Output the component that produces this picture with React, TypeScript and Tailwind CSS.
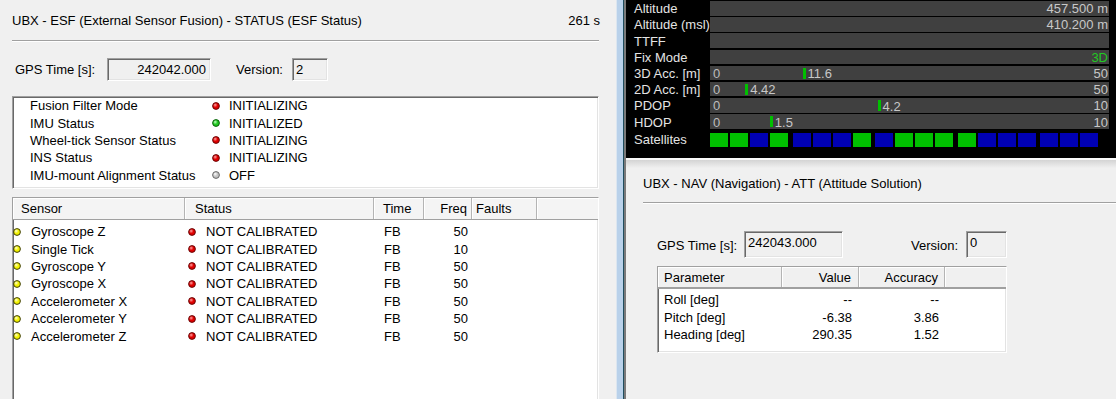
import React from 'react';

type DotColor = 'red' | 'green' | 'gray' | 'yellow';
const DOT: Record<DotColor, [string, string, string]> = {
  red: ['#ffa0a0', '#e00000', '#5a0000'],
  green: ['#c0ffc0', '#22c822', '#005000'],
  gray: ['#ffffff', '#c4c4c4', '#5a5a5a'],
  yellow: ['#ffffd0', '#f2f200', '#2a2a00'],
};

function Dot({ c }: { c: DotColor }) {
  const [hi, mid, edge] = DOT[c];
  const id = `dot-${c}`;
  return (
    <svg width="8" height="8" viewBox="0 0 8 8" className="shrink-0">
      <defs>
        <radialGradient id={id} cx="0.38" cy="0.35" r="0.7">
          <stop offset="0" stopColor={hi} />
          <stop offset="0.5" stopColor={mid} />
          <stop offset="1" stopColor={mid} />
        </radialGradient>
      </defs>
      <circle cx="4" cy="4" r="3.4" fill={`url(#${id})`} stroke={edge} strokeWidth="0.9" />
    </svg>
  );
}

const sunken =
  'border border-t-[#a0a0a0] border-l-[#a0a0a0] border-b-white border-r-white shadow-[inset_1px_1px_0_#696969,inset_-1px_-1px_0_#e3e3e3]';
const hdrCell =
  'h-full flex items-center border-r border-r-[#b4b4b4] shadow-[inset_1px_1px_0_#ffffff]';

const fusion: [string, DotColor, string][] = [
  ['Fusion Filter Mode', 'red', 'INITIALIZING'],
  ['IMU Status', 'green', 'INITIALIZED'],
  ['Wheel-tick Sensor Status', 'red', 'INITIALIZING'],
  ['INS Status', 'red', 'INITIALIZING'],
  ['IMU-mount Alignment Status', 'gray', 'OFF'],
];

const sensors: [string, string][] = [
  ['Gyroscope Z', '50'],
  ['Single Tick', '10'],
  ['Gyroscope Y', '50'],
  ['Gyroscope X', '50'],
  ['Accelerometer X', '50'],
  ['Accelerometer Y', '50'],
  ['Accelerometer Z', '50'],
];

type Bar = {
  label: string;
  zero?: boolean;
  marker?: number;
  max?: number;
  mtext?: string;
  right?: string;
  green?: boolean;
};
const bars: Bar[] = [
  { label: 'Altitude', right: '457.500 m' },
  { label: 'Altitude (msl)', right: '410.200 m' },
  { label: 'TTFF' },
  { label: 'Fix Mode', right: '3D', green: true },
  { label: '3D Acc. [m]', zero: true, marker: 11.6, max: 50, mtext: '11.6', right: '50' },
  { label: '2D Acc. [m]', zero: true, marker: 4.42, max: 50, mtext: '4.42', right: '50' },
  { label: 'PDOP', zero: true, marker: 4.2, max: 10, mtext: '4.2', right: '10' },
  { label: 'HDOP', zero: true, marker: 1.5, max: 10, mtext: '1.5', right: '10' },
];

const sats: string[][] = [
  ['g', 'g', 'b', 'g'],
  ['b', 'b', 'b', 'g'],
  ['b', 'g', 'g', 'g'],
  ['g', 'b', 'b', 'b'],
  ['b', 'b', 'b'],
];

const att: [string, string, string][] = [
  ['Roll [deg]', '--', '--'],
  ['Pitch [deg]', '-6.38', '3.86'],
  ['Heading [deg]', '290.35', '1.52'],
];

function LeftPanel() {
  return (
    <div className="w-[616px] h-[399px] shrink-0 bg-[#f0f0f0] pl-[12px] flex flex-col overflow-hidden">
      <div className="w-[588px] h-[40px] shrink-0 flex items-center justify-between">
        <span>UBX - ESF (External Sensor Fusion) - STATUS (ESF Status)</span>
        <span>261 s</span>
      </div>
      <div className="w-[587px] h-[2px] shrink-0 border-t border-t-[#a0a0a0] border-b border-b-white" />
      <div className="mt-[16px] h-[23px] shrink-0 flex items-center pl-[3px]">
        <span className="w-[92px]">GPS Time [s]:</span>
        <div className={`w-[104px] h-[23px] ${sunken} bg-[#f0f0f0] flex items-center justify-end pr-[4px]`}>
          242042.000
        </div>
        <span className="ml-[25px] w-[56px]">Version:</span>
        <div className={`w-[36px] h-[23px] ${sunken} bg-[#f0f0f0] flex items-center pl-[3px]`}>2</div>
      </div>
      <div className={`mt-[15px] w-[587px] h-[93px] shrink-0 ${sunken} bg-white flex flex-col`}>
        {fusion.map(([l, c, s]) => (
          <div key={l} className="h-[17.4px] flex items-center">
            <span className="w-[199px] pl-[17px] shrink-0 whitespace-nowrap">{l}</span>
            <Dot c={c} />
            <span className="ml-[9px]">{s}</span>
          </div>
        ))}
      </div>
      <div className={`mt-[8px] w-[587px] h-[240px] shrink-0 ${sunken} bg-white flex flex-col`}>
        <div className="h-[22px] shrink-0 bg-[#f4f4f4] border-b border-b-[#a0a0a0] grid grid-cols-[172px_189px_50px_48px_65px_1fr]">
          <div className={`${hdrCell} pl-[8px]`}>Sensor</div>
          <div className={`${hdrCell} pl-[10px]`}>Status</div>
          <div className={`${hdrCell} pl-[9px]`}>Time</div>
          <div className={`${hdrCell} justify-end pr-[4px]`}>Freq</div>
          <div className={`${hdrCell} pl-[4px]`}>Faults</div>
          <div className="h-full shadow-[inset_1px_1px_0_#ffffff]" />
        </div>
        <div className="pt-[3px] flex flex-col">
          {sensors.map(([n, f]) => (
            <div key={n} className="h-[17.4px] grid grid-cols-[172px_189px_50px_48px_65px_1fr] items-center">
              <div className="flex items-center">
                <Dot c="yellow" />
                <span className="ml-[10px]">{n}</span>
              </div>
              <div className="flex items-center pl-[3px]">
                <Dot c="red" />
                <span className="ml-[10px]">NOT CALIBRATED</span>
              </div>
              <div className="pl-[10px]">FB</div>
              <div className="text-right pr-[4px]">{f}</div>
              <div />
              <div />
            </div>
          ))}
        </div>
      </div>
    </div>
  );
}

function Frame() {
  return (
    <div className="w-[10px] h-[399px] shrink-0 flex">
      <div className="w-[1px] bg-[#dce6f0]" />
      <div className="w-[6px] bg-[#b9d1ea]" />
      <div className="w-[1px] bg-[#1f4d5e]" />
      <div className="w-[2px] bg-[#7a7a7a]" />
    </div>
  );
}

function BlackPanel() {
  return (
    <div className="h-[158px] shrink-0 bg-black pl-[8px] pr-[7px] pt-[1px] flex flex-col gap-[1.7px] text-[#e4e4e4]">
      {bars.map((b) => (
        <div key={b.label} className="h-[14.5px] flex items-center">
          <span className="w-[76px] shrink-0 whitespace-nowrap leading-[14px] pt-[2px]">{b.label}</span>
          <div className="relative w-[399px] h-[14.5px] bg-[#404040] flex items-center text-[#bdbdbd] leading-[14px] pt-[2px]">
            {b.zero && <span className="pl-[3px]">0</span>}
            {b.marker !== undefined && b.max !== undefined && (
              <div
                className="absolute top-[2px] h-[11px] flex items-center"
                style={{ left: `${(b.marker / b.max) * 399}px` }}
              >
                <div className="w-[3px] h-[11px] bg-[#00c000]" />
                <span className="ml-[2px] text-[#c8c8c8] pt-[2px]">{b.mtext}</span>
              </div>
            )}
            {b.right && (
              <span className={`ml-auto pr-[1px] ${b.green ? 'text-[#22c822]' : 'text-[#c8c8c8]'}`}>{b.right}</span>
            )}
          </div>
        </div>
      ))}
      <div className="h-[16px] flex items-start">
        <span className="w-[76px] shrink-0 leading-[16px] mt-[1px]">Satellites</span>
        <div className="flex gap-[4.5px] mt-[2.5px]">
          {sats.map((g, i) => (
            <div key={i} className="flex gap-[2px]">
              {g.map((s, j) => (
                <div
                  key={j}
                  className={`w-[18px] h-[13.5px] ${s === 'g' ? 'bg-[#00c000]' : 'bg-[#0000b4]'}`}
                />
              ))}
            </div>
          ))}
        </div>
      </div>
    </div>
  );
}

function AttPanel() {
  return (
    <div className="flex-1 bg-[#f0f0f0] flex flex-col">
      <div className="h-[2px] shrink-0 bg-[#fafafa]" />
      <div className="h-[8px] shrink-0 bg-gradient-to-b from-[#d4d4d4] to-[#f0f0f0]" />
      <div className="pl-[17px] flex flex-col">
        <div className="h-[30px] flex items-center">UBX - NAV (Navigation) - ATT (Attitude Solution)</div>
        <div className="mt-[4px] h-[2px] border-t border-t-[#a0a0a0] border-b border-b-white" />
        <div className="pl-[14px] w-[364px] mt-[27px] flex flex-col">
          <div className="h-[27px] flex items-center justify-between">
            <div className="flex items-center">
              <span className="w-[87px] pt-[2px]">GPS Time [s]:</span>
              <div className={`w-[99px] h-[27px] ${sunken} bg-[#f0f0f0] flex items-start pl-[3px] pt-[3px]`}>
                242043.000
              </div>
            </div>
            <div className="flex items-center">
              <span className="mr-[8px] pt-[2px]">Version:</span>
              <div className={`w-[41px] h-[27px] ${sunken} bg-[#f0f0f0] flex items-start pl-[3px] pt-[3px]`}>0</div>
            </div>
          </div>
          <div className={`mt-[8px] w-[350px] h-[87px] ${sunken} bg-white flex flex-col`}>
            <div className="h-[22px] shrink-0 bg-[#f0f0f0] border-b-2 border-b-[#a0a0a0] grid grid-cols-[124px_77px_86px_1fr]">
              <div className={`${hdrCell} pl-[6px]`}>Parameter</div>
              <div className={`${hdrCell} justify-end pr-[7px]`}>Value</div>
              <div className={`${hdrCell} justify-end pr-[6px]`}>Accuracy</div>
              <div className="h-full shadow-[inset_1px_1px_0_#ffffff]" />
            </div>
            <div className="pt-[2px] flex flex-col">
              {att.map(([p, v, a]) => (
                <div key={p} className="h-[17.5px] grid grid-cols-[124px_77px_86px_1fr] items-center">
                  <div className="pl-[6px]">{p}</div>
                  <div className="text-right pr-[7px]">{v}</div>
                  <div className="text-right pr-[6px]">{a}</div>
                  <div />
                </div>
              ))}
            </div>
          </div>
        </div>
      </div>
    </div>
  );
}

export default function App() {
  return (
    <div className="w-[1116px] h-[399px] overflow-hidden flex font-['Liberation_Sans',Arial,sans-serif] text-[13px] leading-[15px] text-black bg-[#f0f0f0]">
      <LeftPanel />
      <Frame />
      <div className="w-[490px] h-[399px] flex flex-col">
        <BlackPanel />
        <AttPanel />
      </div>
    </div>
  );
}
